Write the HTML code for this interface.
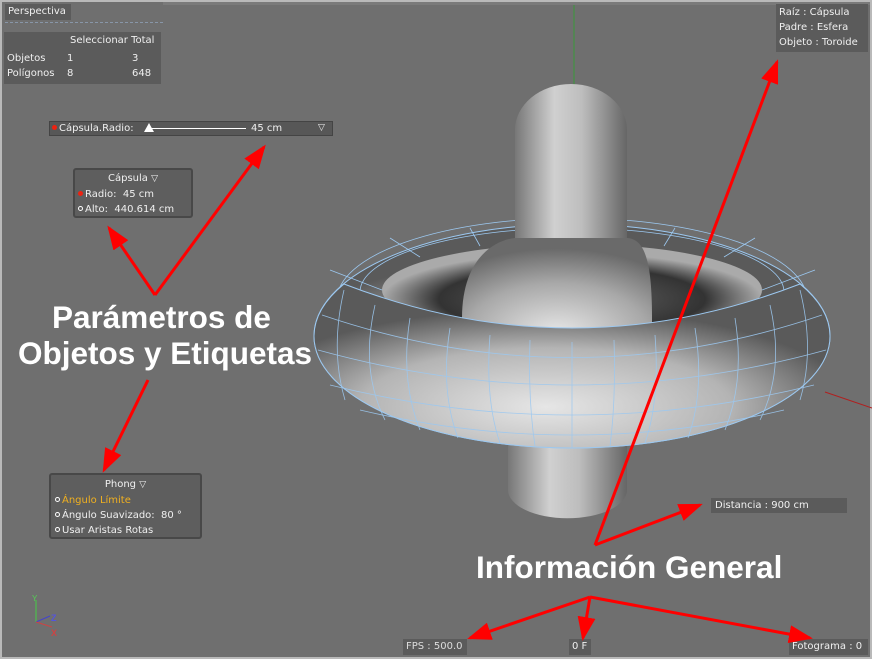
<!DOCTYPE html>
<html><head><meta charset="utf-8"><style>
*{margin:0;padding:0;box-sizing:border-box}
body{width:872px;height:659px;background:#6f6f6f;position:relative;overflow:hidden;font-family:"DejaVu Sans","Liberation Sans",sans-serif;color:#eee}
.frame{position:absolute;left:0;top:0;width:872px;height:659px;border:2px solid #b9b9b9}
.box{position:absolute;background:#5b5b5b;font-size:10px;line-height:15px;color:#f0f0f0;white-space:nowrap}
.pnl{position:absolute;background:#5e5e5e;border:2px solid #484848;border-radius:3px;font-size:10px;line-height:15px;color:#f0f0f0;white-space:nowrap}
.big{position:absolute;font-family:"Liberation Sans",sans-serif;font-size:31.5px;font-weight:bold;color:#fff;white-space:nowrap}
.dot{display:inline-block;width:5px;height:5px;border-radius:50%;margin-right:2px;vertical-align:1px}
.r{background:#e21}.o{border:1px solid #fff}
</style></head><body>
<div class="frame"></div>
<div style="position:absolute;left:163px;top:2px;width:707px;height:3px;background:#7a7a7a"></div>
<div class="box" style="left:5px;top:4px;width:66px;height:16px;padding-left:3px">Perspectiva</div>
<div style="position:absolute;left:5px;top:22px;width:158px;border-top:1px dashed #8896a8"></div>
<div class="box" style="left:4px;top:32px;width:157px;height:52px;padding:1px 3px">
<div style="padding-left:63px">Seleccionar Total</div>
<div style="margin-top:3px">Objetos<span style="position:absolute;left:63px">1</span><span style="position:absolute;left:128px">3</span></div>
<div>Polígonos<span style="position:absolute;left:63px">8</span><span style="position:absolute;left:128px">648</span></div>
</div>
<div class="box" style="left:49px;top:121px;width:284px;height:15px;border:1px solid #444;background:#575757;line-height:13px;padding-left:2px"><span class="dot r"></span>Cápsula.Radio:
<span style="position:absolute;left:94px;top:1px;width:0;height:0;border-left:5px solid transparent;border-right:5px solid transparent;border-bottom:9px solid #fff"></span>
<span style="position:absolute;left:99px;top:6px;width:97px;height:1px;background:#fff"></span>
<span style="position:absolute;left:201px">45 cm</span><span style="position:absolute;left:268px;font-size:9px">▽</span></div>
<div class="pnl" style="left:73px;top:168px;width:120px;height:50px;padding:1px 3px">
<div style="text-align:center">Cápsula <span style="font-size:9px">▽</span></div>
<div><span class="dot r"></span>Radio:&nbsp; 45 cm</div>
<div><span class="dot o"></span>Alto:&nbsp; 440.614 cm</div>
</div>
<div class="pnl" style="left:49px;top:473px;width:153px;height:66px;padding:2px 4px">
<div style="text-align:center">Phong <span style="font-size:9px">▽</span></div>
<div style="color:#f0b020"><span class="dot o"></span>Ángulo Límite</div>
<div><span class="dot o"></span>Ángulo Suavizado:&nbsp; 80 °</div>
<div><span class="dot o"></span>Usar Aristas Rotas</div>
</div>
<div class="box" style="left:776px;top:4px;width:92px;height:48px;padding:1px 3px;line-height:15px">Raíz : Cápsula<br>Padre : Esfera<br>Objeto : Toroide</div>
<div class="box" style="left:711px;top:498px;width:136px;height:15px;padding-left:4px;line-height:15px">Distancia : 900 cm</div>
<div class="box" style="left:403px;top:639px;width:64px;height:16px;padding-left:3px;line-height:16px;color:#ddd">FPS : 500.0</div>
<div class="box" style="left:569px;top:639px;width:22px;height:16px;padding-left:3px;line-height:16px">0 F</div>
<div class="box" style="left:789px;top:639px;width:79px;height:16px;padding-left:3px;line-height:16px">Fotograma : 0</div>

<svg style="position:absolute;left:0;top:0" width="872" height="659">
<defs>
<linearGradient id="cyl" x1="0" x2="1"><stop offset="0" stop-color="#777"/><stop offset=".35" stop-color="#d0d0d0"/><stop offset=".6" stop-color="#bdbdbd"/><stop offset="1" stop-color="#666"/></linearGradient>
<radialGradient id="bulb" cx=".5" cy=".9" r=".8"><stop offset="0" stop-color="#e8e8e8"/><stop offset=".6" stop-color="#a8a8a8"/><stop offset="1" stop-color="#6a6a6a"/></radialGradient>
<radialGradient id="tor" cx=".45" cy=".75" r=".6"><stop offset="0" stop-color="#e6e6e6"/><stop offset=".6" stop-color="#b4b4b4"/><stop offset="1" stop-color="#5a5a5a"/></radialGradient>
<radialGradient id="hole" cx=".5" cy=".6" r=".5"><stop offset="0" stop-color="#666"/><stop offset=".7" stop-color="#333"/><stop offset="1" stop-color="#aaa"/></radialGradient>
<marker id="a" markerWidth="8" markerHeight="6" refX="7" refY="3" orient="auto" markerUnits="strokeWidth"><path d="M0,0 L8,3 L0,6 Z" fill="#f00"/></marker>
</defs>
<line x1="574" y1="5" x2="574" y2="88" stroke="#3a9a3a" stroke-width="1"/>
<line x1="825" y1="392" x2="872" y2="408" stroke="#b02020" stroke-width="1"/>
<path d="M508,440 L508,490 A59,28 0 0 0 627,490 L627,440 Z" fill="url(#cyl)"/>
<ellipse cx="572" cy="336" rx="258" ry="112" fill="url(#tor)" stroke="#9cc8f0" stroke-width="1"/>
<ellipse cx="572" cy="290" rx="190" ry="46" fill="url(#hole)"/>
<g fill="none" stroke="#9cc8f0" stroke-width=".8">
<ellipse cx="572" cy="300" rx="235" ry="82"/>
<ellipse cx="572" cy="292" rx="212" ry="64"/>
<path d="M382,290 L330,270 M420,257 L390,238 M480,246 L470,228 M664,246 L675,228 M724,257 L755,238 M762,290 L815,270"/>
</g>
<path d="M515,242 L515,130 A56,46 0 0 1 627,130 L627,242 Z" fill="url(#cyl)"/>
<path d="M462,345 L462,318 C462,258 495,240 515,238 L628,238 C645,240 652,262 652,318 L652,345 Z" fill="url(#bulb)"/>
<path d="M314,336 A258,112 0 0 0 830,336 A258,112 0 0 0 800,284 Q572,372 344,284 A258,112 0 0 0 314,336 Z" fill="url(#tor)" stroke="#9cc8f0" stroke-width="1"/>
<g fill="none" stroke="#9cc8f0" stroke-width=".8" opacity=".9">
<path d="M322,315 Q572,400 822,315"/>
<path d="M318,350 Q572,420 826,350"/>
<path d="M330,385 Q572,445 814,385"/>
<path d="M360,410 Q572,460 784,410"/>
<path d="M344,290 Q330,350 345,400 M375,305 Q360,370 385,420 M410,318 Q400,380 420,430 M450,328 Q440,390 458,438 M490,335 Q485,400 500,443 M530,340 Q528,400 535,446 M572,342 L572,448 M614,340 Q616,400 610,446 M655,335 Q660,400 645,443 M695,328 Q705,390 688,438 M735,318 Q745,380 725,430 M770,305 Q785,370 760,420 M800,290 Q815,350 800,400"/>
</g>
<g stroke="#f00" stroke-width="3" fill="none" marker-end="url(#a)">
<line x1="155" y1="295" x2="109" y2="228"/>
<line x1="155" y1="295" x2="264" y2="147"/>
<line x1="148" y1="380" x2="104" y2="470"/>
<line x1="595" y1="545" x2="777" y2="62"/>
<line x1="595" y1="545" x2="700" y2="505"/>
<line x1="590" y1="597" x2="470" y2="638"/>
<line x1="590" y1="597" x2="583" y2="638"/>
<line x1="590" y1="597" x2="810" y2="638"/>
</g>
<line x1="36" y1="600" x2="36" y2="622" stroke="#4c4" stroke-width="1"/>
<line x1="36" y1="622" x2="50" y2="616" stroke="#44c" stroke-width="1"/>
<line x1="36" y1="622" x2="52" y2="627" stroke="#c44" stroke-width="1"/>
<text x="32" y="601" font-size="8" fill="#5c5" font-family="Liberation Sans">Y</text>
<text x="51" y="621" font-size="9" fill="#55d" font-family="Liberation Sans" font-weight="bold">Z</text>
<text x="51" y="636" font-size="9" fill="#c44" font-family="Liberation Sans" font-weight="bold">X</text>
</svg>
<div class="big" style="left:52px;top:299px">Parámetros de</div>
<div class="big" style="left:18px;top:335px">Objetos y Etiquetas</div>
<div class="big" style="left:476px;top:549px">Información General</div>
</body></html>
